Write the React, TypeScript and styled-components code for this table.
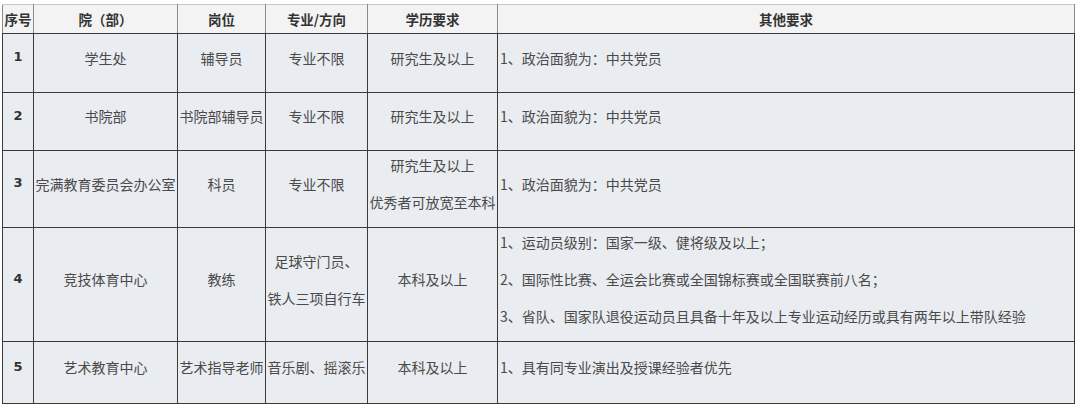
import React from 'react'
import styled, {createGlobalStyle} from 'styled-components'

type RowType = {
    no: number
    dept: string
    post: string
    major: string[]
    degree: string[]
    other: string[]
    height: number
}

const rows: RowType[] = [
    {no: 1, dept: '学生处', post: '辅导员', major: ['专业不限'], degree: ['研究生及以上'], other: ['1、政治面貌为：中共党员'], height: 59},
    {no: 2, dept: '书院部', post: '书院部辅导员', major: ['专业不限'], degree: ['研究生及以上'], other: ['1、政治面貌为：中共党员'], height: 58},
    {
        no: 3, dept: '完满教育委员会办公室', post: '科员', major: ['专业不限'],
        degree: ['研究生及以上', '优秀者可放宽至本科'], other: ['1、政治面貌为：中共党员'], height: 77
    },
    {
        no: 4, dept: '竞技体育中心', post: '教练', major: ['足球守门员、', '铁人三项自行车'], degree: ['本科及以上'],
        other: [
            '1、运动员级别：国家一级、健将级及以上；',
            '2、国际性比赛、全运会比赛或全国锦标赛或全国联赛前八名；',
            '3、省队、国家队退役运动员且具备十年及以上专业运动经历或具有两年以上带队经验',
        ],
        height: 113
    },
    {no: 5, dept: '艺术教育中心', post: '艺术指导老师', major: ['音乐剧、摇滚乐'], degree: ['本科及以上'], other: ['1、具有同专业演出及授课经验者优先'], height: 62},
]

const heads = ['序号', '院（部）', '岗位', '专业/方向', '学历要求', '其他要求']
const widths = [31, 144, 88, 102, 130, 577]

const Lines = ({items}: {items: string[]}) => (
    <>
        {items.map((t, i) => <Line key={i}>{t}</Line>)}
    </>
)

const App = () => {
    return (
        <Page>
            <GlobalStyle/>
            <Table>
                <colgroup>
                    {widths.map((w, i) => <col key={i} style={{width: w}}/>)}
                </colgroup>
                <thead>
                <HeadRow>
                    {heads.map(h => <HeadCell key={h}>{h}</HeadCell>)}
                </HeadRow>
                </thead>
                <tbody>
                {rows.map(r => (
                    <Row key={r.no} $h={r.height}>
                        <NoCell>{r.no}</NoCell>
                        <Cell><Lines items={[r.dept]}/></Cell>
                        <Cell><Lines items={[r.post]}/></Cell>
                        <Cell><Lines items={r.major}/></Cell>
                        <Cell><Lines items={r.degree}/></Cell>
                        <Cell $left><Lines items={r.other}/></Cell>
                    </Row>
                ))}
                </tbody>
            </Table>
        </Page>
    )
}

export default App

const GlobalStyle = createGlobalStyle`
    body {
        margin: 0;
        background: #fff;
    }
`

const Page = styled.div`
    padding: 4px 6px 0 2px;
    font-family: 'Noto Sans CJK SC', 'Liberation Sans', sans-serif;
`

const Table = styled.table`
    width: 1072px;
    border-collapse: collapse;
    table-layout: fixed;
    background: #e9ecf0;
    border: 1px solid #3a3a3a;
    border-top-color: #c8c8c8;
`

const HeadRow = styled.tr`
    height: 29px;
    background: #f3f3f3;
`

const HeadCell = styled.th`
    padding: 0;
    border: 1px solid #8a8a8a;
    border-top-color: #c8c8c8;
    border-bottom-color: #3a3a3a;
    font-size: 13.5px;
    font-weight: 700;
    color: #333;
    text-align: center;
    white-space: nowrap;
`

const Row = styled.tr<{$h: number}>`
    height: ${props => props.$h}px;
`

const NoCell = styled.td`
    padding: 0 0 13px;
    border: 1px solid #3a3a3a;
    font-family: 'DejaVu Sans', 'Liberation Sans', sans-serif;
    font-size: 13px;
    font-weight: 700;
    color: #333;
    text-align: center;
    vertical-align: middle;
`

const Cell = styled.td<{$left?: boolean}>`
    padding: 2px 0 0 ${props => props.$left ? '2px' : '0'};
    border: 1px solid #3a3a3a;
    font-size: 14px;
    color: #4a4a4a;
    text-align: ${props => props.$left ? 'left' : 'center'};
    vertical-align: middle;
    white-space: nowrap;
`

const Line = styled.p`
    margin: 0 0 13px;
    line-height: 24px;
`
